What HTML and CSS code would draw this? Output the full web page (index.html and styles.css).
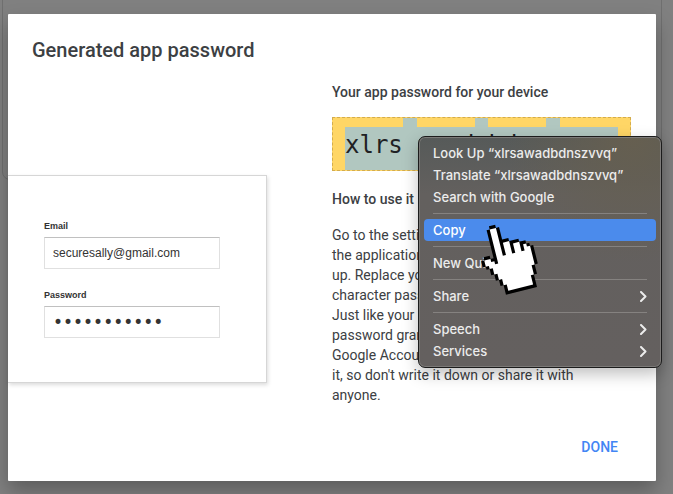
FILE: index.html
```
<!DOCTYPE html>
<html lang="en">
<head>
<meta charset="utf-8">
<meta name="viewport" content="width=device-width, initial-scale=1">
<title>Generated app password</title>
<link rel="stylesheet" href="styles.css">
</head>
<body>
<div class="backdrop-card"></div>
<main class="dialog" role="dialog" aria-labelledby="title">
  <h1 class="title" id="title">Generated app password</h1>
  <div class="columns">
    <form class="signin">
      <label class="signin-label" for="email">Email</label>
      <input class="signin-input" id="email" type="text" value="securesally@gmail.com">
      <label class="signin-label" for="password">Password</label>
      <input class="signin-input signin-secret" id="password" type="password" value="xlrsawadbdn">
    </form>
    <section class="details">
      <h2 class="heading">Your app password for your device</h2>
      <div class="code-box"><code class="code"><span class="word">xlrs</span> <span class="word">awad</span> <span class="word">bdns</span> <span class="word">zvvq</span></code></div>
      <h2 class="heading">How to use it</h2>
      <p class="text">Go to the settings for your Google Account in<br>the application or device you are trying to set<br>up. Replace your password with the 16-<br>character password shown above.<br>Just like your normal password, this app<br>password grants complete access to your<br>Google Account. You won't need to remember<br>it, so don't write it down or share it with<br>anyone.</p>
    </section>
  </div>
  <div class="actions"><button class="done" type="button">DONE</button></div>
</main>

<div class="menu" role="menu">
  <button class="item" role="menuitem">Look Up “xlrsawadbdnszvvq”</button>
  <button class="item" role="menuitem">Translate “xlrsawadbdnszvvq”</button>
  <button class="item" role="menuitem">Search with Google</button>
  <hr class="rule">
  <button class="item item-active" role="menuitem">Copy</button>
  <hr class="rule">
  <button class="item" role="menuitem">New Quick Note</button>
  <hr class="rule">
  <button class="item" role="menuitem">Share<svg class="chevron" viewBox="0 0 7 11"><path d="M1 1l4.5 4.5L1 10"/></svg></button>
  <hr class="rule">
  <button class="item" role="menuitem">Speech<svg class="chevron" viewBox="0 0 7 11"><path d="M1 1l4.5 4.5L1 10"/></svg></button>
  <button class="item" role="menuitem">Services<svg class="chevron" viewBox="0 0 7 11"><path d="M1 1l4.5 4.5L1 10"/></svg></button>
</div>

<svg class="pointer" viewBox="0 0 70 80" aria-hidden="true">
  <g transform="translate(3.4 10.2) rotate(-14) scale(3.2)">
    <path d="M5 0H7V1H8V5H10V6H13V7H15V8H16V9H17V15H16V18H15V22H5V19H4V17H3V15H2V13H1V12H0V10H1V9H3V10H4V1H5Z" fill="#000"/>
    <path d="M5 1H7V10H8V6H10V10H11V7H13V10H14V8H15V9H16V15H15V18H14V21H6V19H5V17H4V15H3V13H2V12H1V10H3V11H4V12H5Z" fill="#fff"/>
  </g>
</svg>
</body>
</html>
```
FILE: styles.css
```
* {
  box-sizing: border-box;
}

body {
  position: relative;
  margin: 0;
  padding: 14px 17px 13px 8px;
  min-height: 100vh;
  overflow: hidden;
  background: #808080;
  font-family: Roboto, sans-serif;
  color: #3c4043;
}

.backdrop-card {
  position: absolute;
  top: -20px;
  left: 2px;
  right: 11px;
  height: 200px;
  border: 1px solid #6f6f6f;
  border-radius: 8px;
}

.dialog {
  position: relative;
  background: #fff;
  border-radius: 1px;
  box-shadow: 0 10px 20px rgba(0, 0, 0, 0.28);
}

.title {
  margin: 0;
  padding: 24px 24px 20px;
  font-size: 20px;
  line-height: 24px;
  font-weight: 500;
}

.columns {
  display: grid;
  grid-template-columns: 1fr 1fr;
}

.signin {
  align-self: start;
  margin: 93px 65px 0 0;
  padding: 44px 46px 44px 36px;
  border: 1px solid #d6d6d6;
  border-left: 0;
  box-shadow: 1px 2px 4px rgba(0, 0, 0, 0.14);
  font-family: "Liberation Sans", sans-serif;
}

.signin-label {
  display: block;
  margin-bottom: 5px;
  font-size: 9px;
  line-height: 12px;
  font-weight: 700;
  color: #333;
}

.signin-input {
  display: block;
  width: 100%;
  height: 32px;
  margin-bottom: 20px;
  padding: 0 8px;
  border: 1px solid #e0e0e0;
  border-top-color: #c0c0c0;
  border-radius: 0;
  background: #fff;
  font-family: "Liberation Sans", sans-serif;
  font-size: 12px;
  color: #333;
}

.signin-secret {
  margin-bottom: 0;
  font-family: "DejaVu Sans", sans-serif;
  font-size: 17px;
}

.details {
  padding-right: 25px;
}

.heading {
  margin: 0;
  font-size: 14px;
  line-height: 20px;
  font-weight: 500;
}

.code-box {
  margin: 15px 0 18px;
  padding: 0 12px;
  border: 1px dashed #d3ac4d;
  background: #ffd666;
}

.code {
  display: flex;
  justify-content: space-between;
  height: 52px;
  background: #b1c7c0;
  font-family: "DejaVu Sans Mono", monospace;
  font-size: 24px;
  line-height: 36px;
  color: #202124;
}

.word {
  border-top: 9px solid #ffd666;
}

.text {
  margin: 16px 0 0;
  font-size: 14px;
  line-height: 20px;
  white-space: nowrap;
}

.actions {
  display: flex;
  justify-content: flex-end;
  padding: 24px 30px 16px;
}

.done {
  padding: 8px;
  border: 0;
  background: none;
  font-family: Roboto, sans-serif;
  font-size: 14px;
  line-height: 20px;
  font-weight: 500;
  color: #4285f4;
}

.menu {
  position: absolute;
  top: 136px;
  right: 11px;
  width: 244px;
  padding: 5px;
  border: 1px solid #1c1c1c;
  border-radius: 7px;
  background: radial-gradient(circle at 88% 0, #665f50, transparent 40%), linear-gradient(#565a59, #63605e 25%, #64605f);
  box-shadow: inset 0 0 0 1px #7c7a78, 0 6px 16px rgba(0, 0, 0, 0.25);
}

.item {
  display: flex;
  align-items: center;
  justify-content: space-between;
  width: 100%;
  height: 22px;
  padding: 0 9px;
  border: 0;
  border-radius: 4px;
  background: none;
  font-family: Inter, sans-serif;
  font-size: 13px;
  line-height: 22px;
  font-weight: 500;
  color: #ececec;
}

.item-active {
  background: #4b8bec;
  color: #fff;
}

.rule {
  height: 1px;
  margin: 5px 9px;
  border: 0;
  background: #858280;
}

.chevron {
  width: 7px;
  height: 11px;
  fill: none;
  stroke: #ececec;
  stroke-width: 2;
  stroke-linecap: round;
  stroke-linejoin: round;
}

.pointer {
  position: absolute;
  top: 220px;
  left: 470px;
  width: 70px;
  height: 80px;
}
```
